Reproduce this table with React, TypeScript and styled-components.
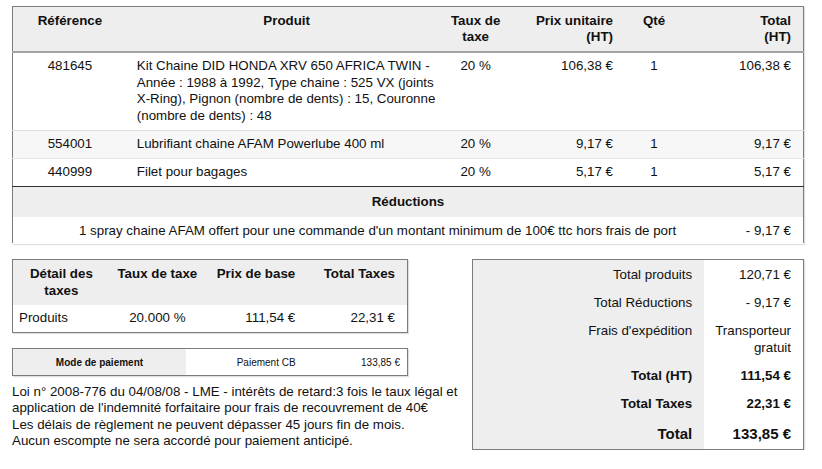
import React from "react";
import styled, { createGlobalStyle } from "styled-components";

const Global = createGlobalStyle`
  html, body { margin: 0; padding: 0; background: #fff; }
  body { font-family: "Liberation Sans", Arial, sans-serif; font-size: 13.33px; color: #111; }
`;

const Page = styled.div`
  width: 792px;
  padding: 6px 0 0 12px;
  display: flex;
  flex-direction: column;
  gap: 15px;
`;

const Table = styled.table<{ $width?: number }>`
  width: ${(p) => (p.$width ? `${p.$width}px` : "100%")};
  border-collapse: collapse;
  table-layout: fixed;
  border: 1px solid #7c7c7c;
  box-shadow: 1px 1px 1px rgba(0, 0, 0, 0.12);
  line-height: 16.6px;
`;

type Align = "left" | "center" | "right";

const Th = styled.th<{ $align?: Align; $pr?: number; $pl?: number }>`
  background: #eeeeee;
  font-weight: bold;
  text-align: ${(p) => p.$align || "center"};
  vertical-align: top;
  padding: 5.5px ${(p) => p.$pr ?? 8}px 5px ${(p) => p.$pl ?? 8}px;
  border-bottom: 2px solid #a3a3a3;
`;

const Tr = styled.tr<{ $shade?: boolean; $line?: string }>`
  background: ${(p) => (p.$shade ? "#f7f7f7" : "#fff")};
  border-bottom: 1px solid ${(p) => p.$line || "transparent"};
`;

const Td = styled.td<{ $align?: Align; $pr?: number; $pl?: number; $pb?: number }>`
  text-align: ${(p) => p.$align || "left"};
  vertical-align: top;
  padding: 5.5px ${(p) => p.$pr ?? 8}px ${(p) => p.$pb ?? 5}px ${(p) => p.$pl ?? 8}px;
`;

const SectionHead = styled.td`
  background: #eeeeee;
  font-weight: bold;
  text-align: center;
  padding: 7px 8px 7px;
  border-top: 1px solid #333;
`;

const Bottom = styled.div`
  display: flex;
  justify-content: space-between;
  align-items: flex-start;
`;

const LeftCol = styled.div`
  flex: 1;
  min-width: 0;
  display: flex;
  flex-direction: column;
`;

const TaxTable = styled(Table)`
  margin-bottom: 15px;
`;

const TaxTh = styled.th<{ $align?: Align; $pr?: number }>`
  background: #eeeeee;
  font-weight: bold;
  text-align: ${(p) => p.$align || "center"};
  vertical-align: top;
  padding: 6px ${(p) => p.$pr ?? 6}px 5px 6px;
`;

const PayTable = styled(Table)`
  font-size: 10px;
  line-height: 12px;
  margin-bottom: 8px;
`;

const PayCell = styled.td<{ $head?: boolean; $align?: Align; $pr?: number }>`
  background: ${(p) => (p.$head ? "#eeeeee" : "#fff")};
  font-weight: ${(p) => (p.$head ? "bold" : "normal")};
  text-align: ${(p) => p.$align || "center"};
  padding: 8px ${(p) => p.$pr ?? 6}px 6px 6px;
`;

const Legal = styled.div`
  line-height: 16.4px;
  color: #111;
`;

const cellPad = (big?: boolean, first?: boolean) =>
  big ? "4px 12px 5px 8px" : first ? "6.5px 12px 6px 8px" : "5.5px 12px 6px 8px";

const TLabel = styled.td<{ $bold?: boolean; $big?: boolean; $first?: boolean }>`
  background: #eeeeee;
  text-align: right;
  vertical-align: top;
  font-weight: ${(p) => (p.$bold ? "bold" : "normal")};
  font-size: ${(p) => (p.$big ? "15px" : "13.33px")};
  line-height: ${(p) => (p.$big ? "21px" : "16.6px")};
  padding: ${(p) => cellPad(p.$big, p.$first)};
`;

const TValue = styled.td<{ $bold?: boolean; $big?: boolean; $first?: boolean }>`
  background: #fff;
  text-align: right;
  vertical-align: top;
  font-weight: ${(p) => (p.$bold ? "bold" : "normal")};
  font-size: ${(p) => (p.$big ? "15px" : "13.33px")};
  line-height: ${(p) => (p.$big ? "21px" : "16.6px")};
  padding: ${(p) => cellPad(p.$big, p.$first)};
`;

const products = [
  {
    ref: "481645",
    name:
      "Kit Chaine DID HONDA XRV 650 AFRICA TWIN - Année : 1988 à 1992, Type chaine : 525 VX (joints X-Ring), Pignon (nombre de dents) : 15, Couronne (nombre de dents) : 48",
    tax: "20 %",
    unit: "106,38 €",
    qty: "1",
    total: "106,38 €",
    shade: false,
    line: "#dcdcdc",
  },
  {
    ref: "554001",
    name: "Lubrifiant chaine AFAM Powerlube 400 ml",
    tax: "20 %",
    unit: "9,17 €",
    qty: "1",
    total: "9,17 €",
    shade: true,
    line: "#e6e6e6",
  },
  {
    ref: "440999",
    name: "Filet pour bagages",
    tax: "20 %",
    unit: "5,17 €",
    qty: "1",
    total: "5,17 €",
    shade: false,
    line: "transparent",
  },
];

const totals = [
  { label: "Total produits", value: "120,71 €" },
  { label: "Total Réductions", value: "- 9,17 €" },
  { label: "Frais d'expédition", value: "Transporteur gratuit" },
  { label: "Total (HT)", value: "111,54 €", bold: true },
  { label: "Total Taxes", value: "22,31 €", bold: true },
  { label: "Total", value: "133,85 €", bold: true, big: true },
];

export default function App() {
  return (
    <>
      <Global />
      <Page>
        <Table>
          <colgroup>
            <col style={{ width: 114 }} />
            <col style={{ width: 319 }} />
            <col style={{ width: 58 }} />
            <col style={{ width: 116 }} />
            <col style={{ width: 66 }} />
            <col style={{ width: 116 }} />
          </colgroup>
          <thead>
            <tr>
              <Th>Référence</Th>
              <Th>Produit</Th>
              <Th $pl={2} $pr={2}>
                Taux de
                <br />
                taxe
              </Th>
              <Th $align="right">
                Prix unitaire
                <br />
                (HT)
              </Th>
              <Th>Qté</Th>
              <Th $align="right" $pr={12}>
                Total
                <br />
                (HT)
              </Th>
            </tr>
          </thead>
          <tbody>
            {products.map((p) => (
              <Tr key={p.ref} $shade={p.shade} $line={p.line}>
                <Td $align="center">{p.ref}</Td>
                <Td $pl={10} $pr={4}>
                  {p.name}
                </Td>
                <Td $align="center" $pl={2} $pr={2}>
                  {p.tax}
                </Td>
                <Td $align="right">{p.unit}</Td>
                <Td $align="center">{p.qty}</Td>
                <Td $align="right" $pr={12}>
                  {p.total}
                </Td>
              </Tr>
            ))}
            <tr>
              <SectionHead colSpan={6}>Réductions</SectionHead>
            </tr>
            <Tr>
              <Td colSpan={5} $align="right" $pr={11} $pb={4}>
                1 spray chaine AFAM offert pour une commande d'un montant minimum de 100€ ttc hors frais de port
              </Td>
              <Td $align="right" $pr={12} $pb={4}>
                - 9,17 €
              </Td>
            </Tr>
          </tbody>
        </Table>

        <Bottom>
          <LeftCol>
            <TaxTable $width={396}>
              <colgroup>
                <col style={{ width: 97 }} />
                <col style={{ width: 95 }} />
                <col style={{ width: 98 }} />
                <col style={{ width: 104 }} />
              </colgroup>
              <thead>
                <tr>
                  <TaxTh>Détail des taxes</TaxTh>
                  <TaxTh>Taux de taxe</TaxTh>
                  <TaxTh $align="right" $pr={8}>
                    Prix de base
                  </TaxTh>
                  <TaxTh $align="right" $pr={12}>
                    Total Taxes
                  </TaxTh>
                </tr>
              </thead>
              <tbody>
                <tr>
                  <Td $pl={6}>Produits</Td>
                  <Td $align="center">20.000 %</Td>
                  <Td $align="right" $pr={8}>
                    111,54 €
                  </Td>
                  <Td $align="right" $pr={12}>
                    22,31 €
                  </Td>
                </tr>
              </tbody>
            </TaxTable>

            <PayTable $width={396}>
              <colgroup>
                <col style={{ width: 173 }} />
                <col style={{ width: 160 }} />
                <col style={{ width: 61 }} />
              </colgroup>
              <tbody>
                <tr>
                  <PayCell $head>Mode de paiement</PayCell>
                  <PayCell>Paiement CB</PayCell>
                  <PayCell $align="right" $pr={7}>
                    133,85 €
                  </PayCell>
                </tr>
              </tbody>
            </PayTable>

            <Legal>
              Loi n° 2008-776 du 04/08/08 - LME - intérêts de retard:3 fois le taux légal et application de
              l'indemnité forfaitaire pour frais de recouvrement de 40€
              <br />
              Les délais de règlement ne peuvent dépasser 45 jours fin de mois.
              <br />
              Aucun escompte ne sera accordé pour paiement anticipé.
            </Legal>
          </LeftCol>

          <Table $width={332}>
            <colgroup>
              <col style={{ width: 231 }} />
              <col style={{ width: 99 }} />
            </colgroup>
            <tbody>
              {totals.map((t, i) => (
                <tr key={t.label}>
                  <TLabel $bold={t.bold} $big={t.big} $first={i === 0}>
                    {t.label}
                  </TLabel>
                  <TValue $bold={t.bold} $big={t.big} $first={i === 0}>
                    {t.value}
                  </TValue>
                </tr>
              ))}
            </tbody>
          </Table>
        </Bottom>
      </Page>
    </>
  );
}
